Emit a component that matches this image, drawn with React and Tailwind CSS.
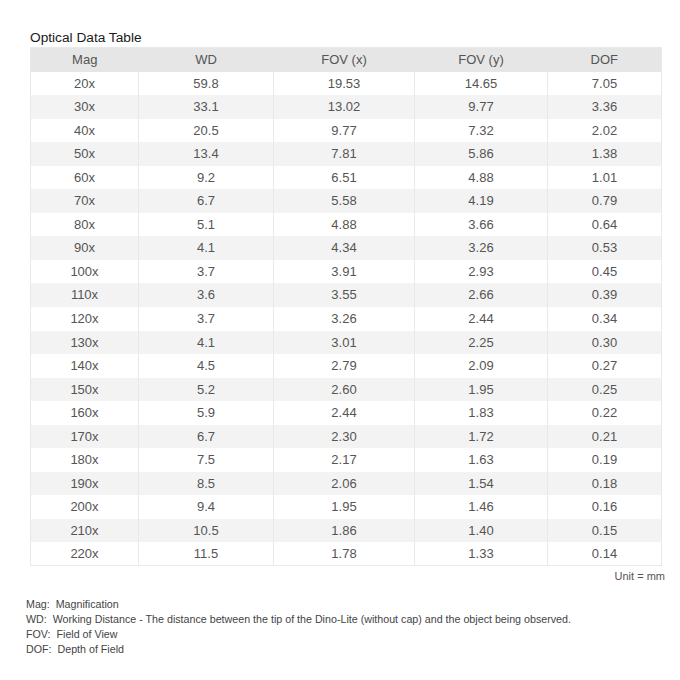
import React from "react";

const rows = [
  ["20x", "59.8", "19.53", "14.65", "7.05"],
  ["30x", "33.1", "13.02", "9.77", "3.36"],
  ["40x", "20.5", "9.77", "7.32", "2.02"],
  ["50x", "13.4", "7.81", "5.86", "1.38"],
  ["60x", "9.2", "6.51", "4.88", "1.01"],
  ["70x", "6.7", "5.58", "4.19", "0.79"],
  ["80x", "5.1", "4.88", "3.66", "0.64"],
  ["90x", "4.1", "4.34", "3.26", "0.53"],
  ["100x", "3.7", "3.91", "2.93", "0.45"],
  ["110x", "3.6", "3.55", "2.66", "0.39"],
  ["120x", "3.7", "3.26", "2.44", "0.34"],
  ["130x", "4.1", "3.01", "2.25", "0.30"],
  ["140x", "4.5", "2.79", "2.09", "0.27"],
  ["150x", "5.2", "2.60", "1.95", "0.25"],
  ["160x", "5.9", "2.44", "1.83", "0.22"],
  ["170x", "6.7", "2.30", "1.72", "0.21"],
  ["180x", "7.5", "2.17", "1.63", "0.19"],
  ["190x", "8.5", "2.06", "1.54", "0.18"],
  ["200x", "9.4", "1.95", "1.46", "0.16"],
  ["210x", "10.5", "1.86", "1.40", "0.15"],
  ["220x", "11.5", "1.78", "1.33", "0.14"],
];

const widths = ["w-[108px]", "w-[135px]", "w-[141px]", "w-[133px]", "w-[114px]"];
const heads = ["Mag", "WD", "FOV (x)", "FOV (y)", "DOF"];

export default function App() {
  return (
    <div className="min-h-[680px] bg-white pt-[29px] font-['Liberation_Sans',Arial,sans-serif]">
      <div className="pl-[30px] text-[13.7px] leading-[18px] text-[#1a1a1a]">Optical Data Table</div>

      <table className="ml-[30px] w-[631px] table-fixed border-collapse border border-[#e9e9e9] text-[13px] text-[#555]">
        <thead>
          <tr className="h-[24px] bg-[#e6e6e6]">
            {heads.map((h, i) => (
              <th key={h} className={`${widths[i]} p-0 text-center font-normal`}>
                {h}
              </th>
            ))}
          </tr>
        </thead>
        <tbody>
          {rows.map((r, idx) => (
            <tr key={r[0]} className={`h-[23.55px] ${idx % 2 ? "bg-[#f3f3f3]" : "bg-white"}`}>
              {r.map((c, i) => (
                <td key={i} className="border-x border-[#e9e9e9] p-0 text-center">
                  {c}
                </td>
              ))}
            </tr>
          ))}
        </tbody>
      </table>

      <div className="w-[665px] pt-[3px] text-right text-[11px] leading-[14px] text-[#555]">Unit = mm</div>

      <div className="mt-[14px] pl-[26px] text-[10.7px] leading-[15px] text-[#444]">
        <div>Mag:&nbsp; Magnification</div>
        <div>WD:&nbsp; Working Distance - The distance between the tip of the Dino-Lite (without cap) and the object being observed.</div>
        <div>FOV:&nbsp; Field of View</div>
        <div>DOF:&nbsp; Depth of Field</div>
      </div>
    </div>
  );
}
